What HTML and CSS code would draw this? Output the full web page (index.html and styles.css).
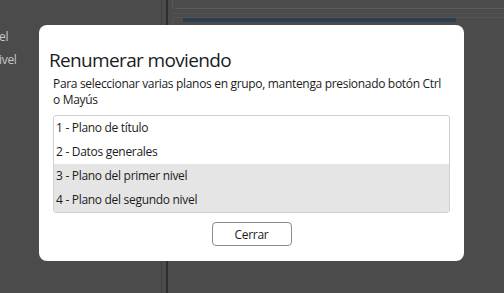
FILE: index.html
```html
<!DOCTYPE html>
<html lang="es">
<head>
<meta charset="utf-8">
<title>Renumerar moviendo</title>
<link rel="stylesheet" href="styles.css">
</head>
<body>
<div class="app">
  <aside class="side">
    <div class="side-item s1">el</div>
    <div class="side-item s2">ivel</div>
  </aside>
  <div class="divider"><span class="line-a"></span><span class="line-b"></span></div>
  <main class="content">
    <div class="panel-top"></div>
    <div class="panel-sub"></div>
    <div class="panel-main"><div class="progress"></div></div>
  </main>
</div>

<div class="dialog" role="dialog" aria-labelledby="dlg-title">
  <h1 id="dlg-title" class="dialog-title">Renumerar moviendo</h1>
  <p class="dialog-text">Para seleccionar varias planos en grupo, mantenga presionado botón Ctrl o Mayús</p>
  <ul class="list">
    <li class="list-item">1 - Plano de título</li>
    <li class="list-item">2 - Datos generales</li>
    <li class="list-item selected">3 - Plano del primer nivel</li>
    <li class="list-item selected">4 - Plano del segundo nivel</li>
  </ul>
  <div class="actions">
    <button class="btn" type="button">Cerrar</button>
  </div>
</div>
</body>
</html>
```
FILE: styles.css
```css
* { box-sizing: border-box; }
html, body { margin: 0; padding: 0; }
body {
  width: 504px;
  height: 293px;
  overflow: hidden;
  background: #4b4b4b;
  font-family: "Open Sans", "Noto Sans", sans-serif;
  position: relative;
}
.app {
  display: flex;
  height: 293px;
}
.side {
  width: 160px;
  padding-top: 29px;
  display: flex;
  flex-direction: column;
  gap: 7px;
  color: #c8c8c8;
  font-size: 12px;
  line-height: 16px;
  letter-spacing: -0.3px;
}
.side-item { white-space: nowrap; }
.s1 { margin-left: -1px; }
.s2 { margin-left: -1px; }
.divider {
  display: flex;
  width: 12px;
}
.line-a { width: 1px; background: #3f3f3f; margin-left: 1px; }
.line-b { width: 2px; background: #2e2e2e; margin-left: 4px; }
.content {
  flex: 1;
  display: flex;
  flex-direction: column;
}
.panel-top {
  height: 9px;
  border-left: 1px solid #5a5a5a;
  border-bottom: 1px solid #5a5a5a;
  border-bottom-left-radius: 4px;
}
.panel-sub {
  height: 5px;
  border-bottom: 1px solid #535353;
}
.panel-main {
  margin-top: 3px;
  height: 40px;
  border: 1px solid #555;
  border-right: none;
  border-bottom: none;
  border-top-left-radius: 4px;
  padding: 0 48px 0 10px;
}
.progress {
  height: 4px;
  background: #2f3e4f;
}

.dialog {
  position: absolute;
  left: 39px;
  top: 25px;
  width: 425px;
  height: 236px;
  background: #fff;
  border-radius: 8px;
  padding: 22px 14px 0 14px;
  display: flex;
  flex-direction: column;
}
.dialog-title {
  margin: 0 0 0 -4px;
  font-weight: 400;
  font-size: 19px;
  line-height: 26px;
  letter-spacing: -0.65px;
  color: #1b1b1b;
}
.dialog-text {
  margin: 3px 0 0 0;
  font-size: 12px;
  line-height: 16px;
  letter-spacing: -0.32px;
  color: #1b1b1b;
}
.list {
  list-style: none;
  margin: 7px 0 0 0;
  padding: 0;
  border: 1px solid #cfcfcf;
  border-radius: 3px;
  overflow: hidden;
  width: 397px;
}
.list-item {
  height: 24px;
  line-height: 24px;
  padding-left: 2px;
  font-size: 12px;
  letter-spacing: -0.3px;
  color: #1b1b1b;
}
.list-item.selected { background: #e5e5e5; }
.actions {
  display: flex;
  justify-content: center;
  margin-top: 9px;
}
.btn {
  width: 80px;
  height: 24px;
  background: #fff;
  border: 1px solid #8c8c8c;
  border-radius: 4px;
  font-family: inherit;
  font-size: 12px;
  letter-spacing: -0.3px;
  color: #1b1b1b;
  padding: 0;
}
```
